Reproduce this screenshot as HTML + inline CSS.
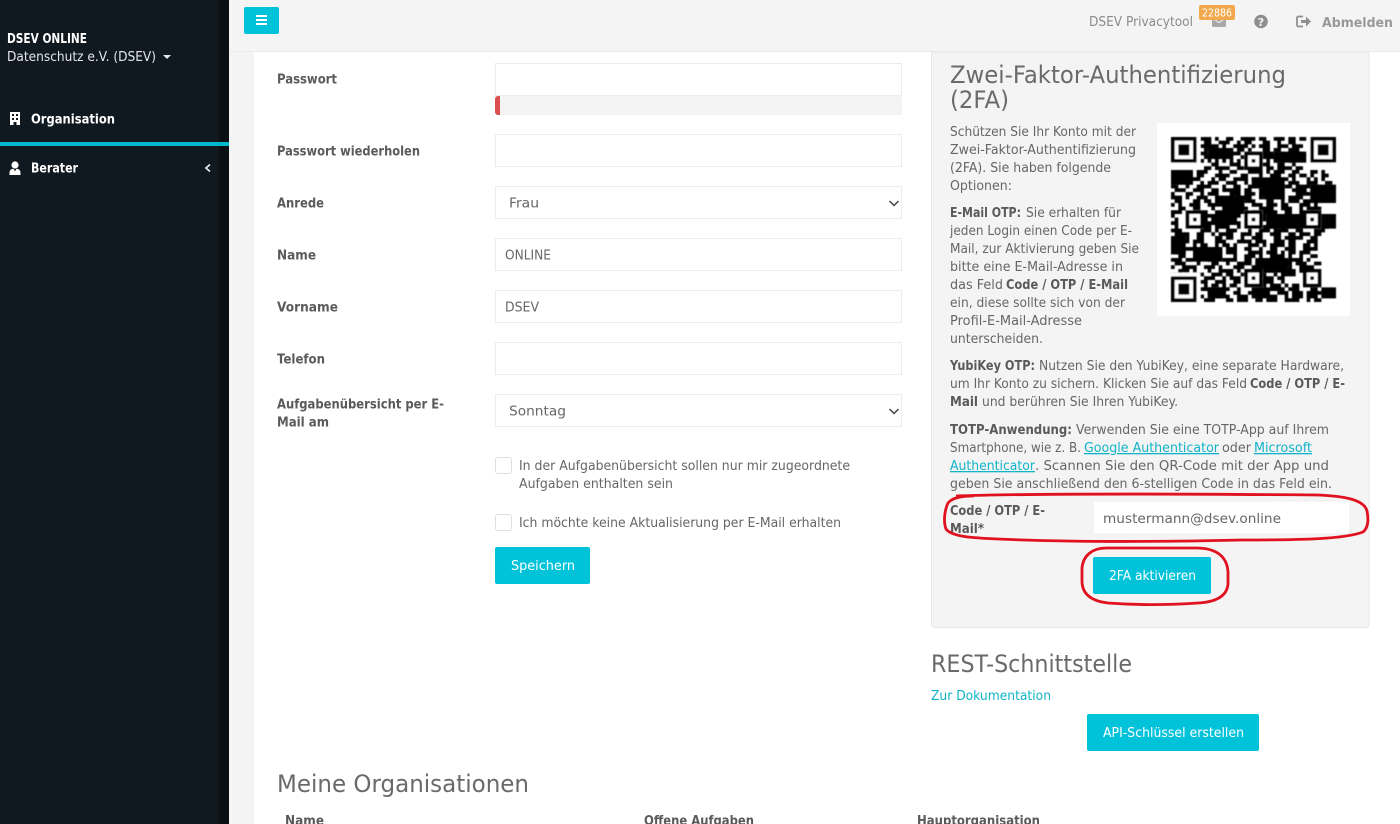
<!DOCTYPE html>
<html lang="de">
<head>
<meta charset="utf-8">
<title>DSEV Privacytool</title>
<style>
html,body{margin:0;padding:0;width:1400px;height:824px;overflow:hidden;background:#fff}
svg{display:block;position:absolute;left:0;top:0}
text{font-family:"DejaVu Sans","Liberation Sans",sans-serif;font-size:13px;fill:#666;white-space:pre}
.b{font-weight:700;fill:#5a5a5a}
.w{fill:#fff}
.h{font-size:24px;fill:#6a6a6a}
.l{fill:#11b3c9;text-decoration:underline}
.a{fill:#11b3c9}
.i{fill:none;stroke:#ececec;stroke-width:1}
</style>
</head>
<body>
<svg width="1400" height="824" viewBox="0 0 1400 824" xmlns="http://www.w3.org/2000/svg">
<defs><filter id="qb" x="-5%" y="-5%" width="110%" height="110%"><feGaussianBlur stdDeviation=".13"/></filter></defs>
<!-- backgrounds -->
<rect width="1400" height="824" fill="#fff"/>
<rect x="229" width="25" height="824" fill="#f4f4f4"/>
<rect x="229" width="1171" height="51" fill="#f4f4f4"/>
<rect x="229" y="51" width="1171" height="1" fill="#ececec"/>
<rect width="219" height="824" fill="#101820"/>
<rect x="219" width="10" height="824" fill="#0a0f14"/>
<rect y="142" width="229" height="4" fill="#00b8cc"/>

<!-- sidebar -->
<text x="7" y="43" class="b w" style="fill:#fff" textLength="80" lengthAdjust="spacingAndGlyphs">DSEV ONLINE</text>
<text x="7" y="61" style="fill:#e4e6e8" textLength="149" lengthAdjust="spacingAndGlyphs">Datenschutz e.V. (DSEV)</text>
<path d="M163 55h8l-4 4z" fill="#e4e6e8"/>
<path fill="#fff" fill-rule="evenodd" d="M10 112h10v13h-10zM12 114v2h2v-2zM16 114v2h2v-2zM12 118v2h2v-2zM16 118v2h2v-2zM13.500 122v3h3v-3z"/>
<text x="31" y="123.500" class="b" style="fill:#fff" textLength="84" lengthAdjust="spacingAndGlyphs">Organisation</text>
<circle cx="15" cy="165" r="3.600" fill="#fff"/>
<path fill="#fff" d="M9.500 175v-2.500c0-2.300 1.800-3.800 4-3.800l1.500 2.500 1.500-2.500c2.200 0 4 1.500 4 3.800v2.500z"/>
<text x="31" y="172.500" class="b" style="fill:#fff" textLength="47" lengthAdjust="spacingAndGlyphs">Berater</text>
<path d="M210 164.500l-4 3.500 4 3.500" fill="none" stroke="#e4e6e8" stroke-width="1.800"/>

<!-- topbar -->
<rect x="244" y="7" width="35" height="27" rx="2" fill="#00c3da"/>
<path d="M256 16h11M256 20h11M256 24h11" stroke="#fff" stroke-width="2"/>
<text x="1089" y="26" style="fill:#8b8b8b" textLength="104" lengthAdjust="spacingAndGlyphs">DSEV Privacytool</text>
<rect x="1212" y="16" width="14" height="11" rx="1.500" fill="#a8a8a8"/>
<path d="M1212 18l7 4.500 7-4.500" fill="none" stroke="#f4f4f4" stroke-width="1"/>
<rect x="1199" y="5" width="36" height="15" rx="2" fill="#f2a94e"/>
<text x="1202" y="16.500" style="fill:#fff;font-size:11px" textLength="30" lengthAdjust="spacingAndGlyphs">22886</text>
<circle cx="1261" cy="21.500" r="6.800" fill="#8f8f8f"/>
<text x="1257.700" y="26" style="fill:#f4f4f4;font-size:11px;font-weight:700" textLength="6.600" lengthAdjust="spacingAndGlyphs">?</text>
<path d="M1303 16.500h-4.500a1.500 1.500 0 0 0-1.500 1.500v7a1.500 1.500 0 0 0 1.500 1.500h4.500" fill="none" stroke="#8f8f8f" stroke-width="1.800"/>
<path d="M1301 20h5v-3.500l5 5-5 5v-3.500h-5z" fill="#8f8f8f"/>
<text x="1322" y="27" class="b" style="fill:#999" textLength="71" lengthAdjust="spacingAndGlyphs">Abmelden</text>

<!-- labels -->
<g transform="translate(0 .6)">
<text x="277" y="83" class="b" textLength="60" lengthAdjust="spacingAndGlyphs">Passwort</text>
<text x="277" y="155" class="b" textLength="143" lengthAdjust="spacingAndGlyphs">Passwort wiederholen</text>
<text x="277" y="207" class="b" textLength="47" lengthAdjust="spacingAndGlyphs">Anrede</text>
<text x="277" y="259" class="b" textLength="39" lengthAdjust="spacingAndGlyphs">Name</text>
<text x="277" y="311" class="b" textLength="61" lengthAdjust="spacingAndGlyphs">Vorname</text>
<text x="277" y="363" class="b" textLength="48" lengthAdjust="spacingAndGlyphs">Telefon</text>
<text x="277" y="408" class="b" textLength="167" lengthAdjust="spacingAndGlyphs">Aufgabenübersicht per E-</text>
<text x="277" y="426" class="b" textLength="52" lengthAdjust="spacingAndGlyphs">Mail am</text>
</g>

<!-- inputs -->
<rect x="495.500" y="63.500" width="406" height="32" class="i"/>
<path d="M498 96h402a2 2 0 0 1 2 2v15a2 2 0 0 1-2 2h-402z" fill="#f3f3f3"/>
<path d="M500 96h-2a3 3 0 0 0-3 3v13a3 3 0 0 0 3 3h2z" fill="#dc4f4f"/>
<rect x="495.500" y="134.500" width="406" height="32" class="i"/>
<rect x="495.500" y="186.500" width="406" height="32" class="i"/>
<rect x="495.500" y="238.500" width="406" height="32" class="i"/>
<rect x="495.500" y="290.500" width="406" height="32" class="i"/>
<rect x="495.500" y="342.500" width="406" height="32" class="i"/>
<rect x="495.500" y="394.500" width="406" height="32" class="i"/>
<text x="509" y="207.500" textLength="30" lengthAdjust="spacingAndGlyphs">Frau</text>
<text x="505" y="259.500" textLength="46" lengthAdjust="spacingAndGlyphs">ONLINE</text>
<text x="505" y="311.500" textLength="34" lengthAdjust="spacingAndGlyphs">DSEV</text>
<text x="509" y="415.500" textLength="57" lengthAdjust="spacingAndGlyphs">Sonntag</text>
<path d="M889.500 201l4.500 4.500 4.500-4.500M889.500 409l4.500 4.500 4.500-4.500" fill="none" stroke="#444" stroke-width="1.500"/>

<!-- checkboxes -->
<rect x="495.500" y="457.500" width="16" height="16" rx="2.500" fill="#fff" stroke="#dedede"/>
<rect x="495.500" y="514.500" width="16" height="16" rx="2.500" fill="#fff" stroke="#dedede"/>
<text x="519" y="470" textLength="331" lengthAdjust="spacingAndGlyphs">In der Aufgabenübersicht sollen nur mir zugeordnete</text>
<text x="519" y="488" textLength="154" lengthAdjust="spacingAndGlyphs">Aufgaben enthalten sein</text>
<text x="519" y="527" textLength="322" lengthAdjust="spacingAndGlyphs">Ich möchte keine Aktualisierung per E-Mail erhalten</text>
<rect x="495" y="547" width="95" height="37" rx="2" fill="#00c3da"/>
<text x="511" y="570" class="w" style="fill:#fff" textLength="64" lengthAdjust="spacingAndGlyphs">Speichern</text>

<!-- 2FA panel -->
<path d="M931.500 52v572a3.500 3.500 0 0 0 3.500 3.500h431a3 3 0 0 0 3-3v-572.500z" fill="#f4f4f4" stroke="#e6e6e6"/>
<text x="950" y="83" class="h" textLength="336" lengthAdjust="spacingAndGlyphs">Zwei-Faktor-Authentifizierung</text>
<text x="950" y="108" class="h" textLength="59" lengthAdjust="spacingAndGlyphs">(2FA)</text>

<text x="950" y="136" textLength="186" lengthAdjust="spacingAndGlyphs">Schützen Sie Ihr Konto mit der</text>
<text x="950" y="154" textLength="186" lengthAdjust="spacingAndGlyphs">Zwei-Faktor-Authentifizierung</text>
<text x="950" y="172" textLength="161" lengthAdjust="spacingAndGlyphs">(2FA). Sie haben folgende</text>
<text x="950" y="190" textLength="62" lengthAdjust="spacingAndGlyphs">Optionen:</text>

<text x="950" y="217" class="b" textLength="71" lengthAdjust="spacingAndGlyphs">E-Mail OTP:</text>
<text x="1026" y="217" textLength="95" lengthAdjust="spacingAndGlyphs">Sie erhalten für</text>
<text x="950" y="235" textLength="182" lengthAdjust="spacingAndGlyphs">jeden Login einen Code per E-</text>
<text x="950" y="253" textLength="189" lengthAdjust="spacingAndGlyphs">Mail, zur Aktivierung geben Sie</text>
<text x="950" y="271" textLength="173" lengthAdjust="spacingAndGlyphs">bitte eine E-Mail-Adresse in</text>
<text x="950" y="289" textLength="53" lengthAdjust="spacingAndGlyphs">das Feld</text>
<text x="1006" y="289" class="b" textLength="122" lengthAdjust="spacingAndGlyphs">Code / OTP / E-Mail</text>
<text x="950" y="307" textLength="175" lengthAdjust="spacingAndGlyphs">ein, diese sollte sich von der</text>
<text x="950" y="325" textLength="132" lengthAdjust="spacingAndGlyphs">Profil-E-Mail-Adresse</text>
<text x="950" y="343" textLength="93" lengthAdjust="spacingAndGlyphs">unterscheiden.</text>

<text x="950" y="370" class="b" textLength="85" lengthAdjust="spacingAndGlyphs">YubiKey OTP:</text>
<text x="1039" y="370" textLength="305" lengthAdjust="spacingAndGlyphs">Nutzen Sie den YubiKey, eine separate Hardware,</text>
<text x="950" y="388" textLength="297" lengthAdjust="spacingAndGlyphs">um Ihr Konto zu sichern. Klicken Sie auf das Feld</text>
<text x="1250" y="388" class="b" textLength="95" lengthAdjust="spacingAndGlyphs">Code / OTP / E-</text>
<text x="950" y="406" class="b" textLength="28" lengthAdjust="spacingAndGlyphs">Mail</text>
<text x="982" y="406" textLength="196" lengthAdjust="spacingAndGlyphs">und berühren Sie Ihren YubiKey.</text>

<text x="950" y="434" class="b" textLength="122" lengthAdjust="spacingAndGlyphs">TOTP-Anwendung:</text>
<text x="1076" y="434" textLength="253" lengthAdjust="spacingAndGlyphs">Verwenden Sie eine TOTP-App auf Ihrem</text>
<text x="950" y="452" textLength="131" lengthAdjust="spacingAndGlyphs">Smartphone, wie z. B.</text>
<text x="1084" y="452" class="l" textLength="135" lengthAdjust="spacingAndGlyphs">Google Authenticator</text>
<text x="1222" y="452" textLength="29" lengthAdjust="spacingAndGlyphs">oder</text>
<text x="1254" y="452" class="l" textLength="58" lengthAdjust="spacingAndGlyphs">Microsoft</text>
<text x="950" y="470" class="l" textLength="85" lengthAdjust="spacingAndGlyphs">Authenticator</text>
<text x="1035" y="470" textLength="294" lengthAdjust="spacingAndGlyphs">. Scannen Sie den QR-Code mit der App und</text>
<text x="950" y="488" textLength="382" lengthAdjust="spacingAndGlyphs">geben Sie anschließend den 6-stelligen Code in das Feld ein.</text>

<text x="950" y="515" class="b" textLength="95" lengthAdjust="spacingAndGlyphs">Code / OTP / E-</text>
<text x="950" y="533" class="b" textLength="34" lengthAdjust="spacingAndGlyphs">Mail*</text>
<rect x="1093" y="501" width="257" height="33" fill="#fff" stroke="#efefef"/>
<text x="1103" y="523" textLength="178" lengthAdjust="spacingAndGlyphs">mustermann@dsev.online</text>
<rect x="1093" y="557" width="118" height="37" rx="2" fill="#00c3da"/>
<text x="1109" y="580" style="fill:#fff" textLength="87" lengthAdjust="spacingAndGlyphs">2FA aktivieren</text>

<!-- red hand-drawn outlines -->
<path d="M956 496C1040 493 1200 494 1318 495c24 1 46 4 49 16 2 10 1 17-4 21-18 7-60 8-120 8-90 2-180 2-245-1-24-1-46-2-52-10-3-8-1-20 2-26 4-5 12-7 26-7z" fill="none" stroke="#e0121f" stroke-width="2.800"/>
<path d="M1106 548h90c20 0 31 8 32 24v12c-1 12-12 18-30 19-30 2-64 2-90 0-17-2-26-9-26-22v-13c1-12 10-20 24-20z" fill="none" stroke="#e0121f" stroke-width="2.800"/>

<!-- QR -->
<rect x="1157" y="123" width="193" height="193" fill="#fff"/>
<g transform="translate(1171 137) scale(3.667)">
<g filter="url(#qb)">
<path fill="none" stroke="#000" stroke-width="1.020" d="
M8 .5h3m1 0h1m2 0h2m2 0h4m1 0h2m2 0h3m1 0h2m1 0h2
M9 1.500h2m2 0h3m2 0h1m1 0h2m3 0h2m2 0h1m2 0h2
M8 2.500h5m1 0h1m2 0h4m1 0h1m1 0h3m2 0h3m1 0h3
M9 3.500h1m2 0h3m3 0h2m1 0h1m3 0h2m1 0h2m2 0h3
M8 4.500h2m3 0h1m1 0h4m4 0h1m1 0h3m2 0h1m1 0h4
M9 5.500h3m2 0h2m3 0h1m5 0h4m1 0h1m2 0h2
M8 6.500h1m1 0h1m1 0h1m1 0h1m1 0h1m1 0h1m5 0h1m1 0h1m1 0h1m1 0h1m1 0h1
M11 7.500h2m3 0h3m6 0h2m2 0h2m2 0h1
M9 8.500h2m1 0h4m2 0h2m1 0h3m2 0h2m1 0h4m1 0h2
M0 9.500h5m2 0h3m3 0h1m2 0h2m3 0h4m1 0h1m1 0h3m2 0h2m3 0h2m1 0h1
M1 10.500h2m1 0h1m2 0h2m3 0h4m3 0h2m3 0h1m2 0h3m2 0h2m1 0h2m1 0h1m2 0h2
M0 11.500h3m2 0h3m3 0h1m1 0h2m2 0h4m1 0h2m3 0h5m1 0h1m3 0h1m1 0h1m1 0h1
M2 12.500h4m2 0h1m1 0h3m2 0h3m2 0h1m2 0h3m1 0h2m3 0h3m2 0h3m2 0h2
M0 13.500h2m2 0h1m2 0h4m3 0h1m2 0h2m2 0h3m3 0h3m1 0h2m1 0h4m2 0h1
M1 14.500h3m2 0h3m2 0h2m1 0h5m1 0h2m2 0h4m1 0h2m2 0h4m1 0h3
M0 15.500h1m3 0h2m2 0h1m1 0h3m3 0h3m1 0h3m1 0h3m2 0h2m3 0h4m1 0h2
M0 16.500h3m1 0h1m2 0h3m2 0h1m3 0h1m1 0h4m2 0h1m1 0h5m1 0h4m2 0h3
M1 17.500h2m3 0h2m1 0h2m1 0h3m2 0h2m1 0h3m3 0h2m2 0h1m1 0h3m1 0h4
M0 18.500h1m1 0h1m2 0h3m2 0h2m2 0h4m1 0h1m2 0h3m1 0h3m1 0h2m3 0h3m1 0h1
M2 19.500h2m2 0h2m3 0h1m2 0h2m1 0h4m3 0h4m2 0h3m2 0h1m1 0h4
M0 20.500h3m5 0h2m2 0h3m1 0h1m1 0h2m2 0h2m1 0h4m2 0h2m2 0h2m1 0h2
M0 21.500h1m8 0h4m1 0h5m4 0h3m1 0h2m1 0h3m5 0h2
M1 22.500h1m7 0h1m1 0h3m1 0h3m5 0h3m2 0h3m1 0h2m6 0h2
M0 23.500h2m7 0h3m2 0h2m1 0h2m5 0h1m1 0h2m3 0h5m5 0h1
M1 24.500h1m7 0h2m1 0h4m2 0h1m6 0h4m1 0h1m1 0h3m6 0h2
M0 25.500h3m5 0h3m1 0h1m2 0h3m3 0h1m2 0h3m1 0h4m2 0h2m3 0h3
M1 26.500h4m2 0h2m2 0h1m1 0h4m2 0h3m1 0h2m2 0h3m2 0h2m1 0h3m1 0h2
M0 27.500h2m2 0h1m2 0h2m3 0h2m1 0h2m2 0h1m2 0h3m3 0h2m1 0h5m2 0h2
M2 28.500h3m1 0h3m3 0h3m3 0h4m1 0h3m2 0h3m1 0h2m3 0h3
M0 29.500h3m3 0h1m1 0h2m2 0h1m1 0h2m1 0h1m3 0h3m1 0h1m1 0h4m1 0h2m2 0h2m1 0h1
M1 30.500h1m1 0h3m2 0h4m3 0h3m2 0h2m2 0h1m2 0h2m2 0h3m2 0h4
M0 31.500h4m2 0h1m2 0h1m1 0h3m1 0h3m3 0h4m1 0h3m1 0h1m1 0h2m1 0h3
M2 32.500h2m3 0h3m2 0h2m3 0h1m2 0h3m1 0h1m2 0h4m1 0h1m2 0h1m2 0h2
M0 33.500h3m1 0h2m1 0h1m2 0h3m1 0h4m2 0h2m2 0h3m1 0h2m2 0h4m1 0h1
M1 34.500h3m3 0h1m3 0h2m2 0h1m2 0h4m1 0h2m3 0h1m1 0h3m1 0h3m2 0h2
M0 35.500h1m2 0h4m2 0h3m1 0h1m3 0h3m2 0h2m1 0h4m3 0h1m2 0h4
M2 36.500h3m1 0h1m3 0h1m2 0h4m1 0h1m3 0h2m2 0h2m2 0h4m1 0h2m1 0h2
M0 37.500h3m3 0h3m2 0h3m1 0h2m2 0h3m1 0h3m2 0h1m1 0h4m2 0h1m1 0h2
M9 38.500h3m2 0h1m1 0h3m3 0h1m2 0h3m1 0h2m6 0h2
M8 39.500h2m2 0h3m2 0h2m5 0h4m2 0h1m7 0h2
M9 40.500h1m1 0h2m1 0h1m1 0h2m6 0h2m1 0h3m1 0h1m6 0h3
M8 41.500h3m2 0h3m2 0h1m5 0h1m2 0h4m1 0h1m5 0h2
M10 42.500h2m2 0h1m2 0h2m2 0h3m1 0h2m2 0h3m1 0h3m1 0h4
M8 43.500h1m2 0h3m1 0h1m2 0h3m3 0h1m2 0h2m2 0h1m1 0h3m1 0h3
M9 44.500h3m3 0h2m1 0h3m2 0h2m1 0h3m2 0h4m2 0h1m1 0h2"/>
<path fill="#000" d="M10 3h7v3h-7zM28 4h9v3h-9zM0 9h6v4h-6zM22 11h9v3h-9zM25 14h6v3h-6zM12 16h8v3h-8zM14 19h6v2h-6zM38 13h7v5h-7zM11 21h7v3h-7zM26 21h10v4h-10zM40 21h5v4h-5zM0 27h4v5h-4zM6 30h8v4h-8zM23 33h9v4h-9zM10 41h5v3h-5zM22 41h5v3h-5zM33 40h2v4h-2zM41 41h4v3h-4z"/>
<path fill="#fff" d="M0 0h8v8h-8zM37 0h8v8h-8zM0 37h8v8h-8zM20 4h5v5h-5zM4 20h5v5h-5zM20 20h5v5h-5zM36 20h5v5h-5zM20 36h5v5h-5zM36 36h5v5h-5z"/>
<path fill="#000" fill-rule="evenodd" d="M0 0h7v7h-7zM1 1v5h5v-5zM2 2h3v3h-3zM38 0h7v7h-7zM39 1v5h5v-5zM40 2h3v3h-3zM0 38h7v7h-7zM1 39v5h5v-5zM2 40h3v3h-3zM20 4h5v5h-5zM21 5v3h3v-3zM22 6h1v1h-1zM4 20h5v5h-5zM5 21v3h3v-3zM6 22h1v1h-1zM20 20h5v5h-5zM21 21v3h3v-3zM22 22h1v1h-1zM36 20h5v5h-5zM37 21v3h3v-3zM38 22h1v1h-1zM20 36h5v5h-5zM21 37v3h3v-3zM22 38h1v1h-1zM36 36h5v5h-5zM37 37v3h3v-3zM38 38h1v1h-1z"/>
</g>
</g>

<!-- REST -->
<text x="931" y="672" class="h" textLength="201" lengthAdjust="spacingAndGlyphs">REST-Schnittstelle</text>
<text x="931" y="700" class="a" textLength="120" lengthAdjust="spacingAndGlyphs">Zur Dokumentation</text>
<rect x="1087" y="714" width="172" height="37" rx="2" fill="#00c3da"/>
<text x="1103" y="737" style="fill:#fff" textLength="141" lengthAdjust="spacingAndGlyphs">API-Schlüssel erstellen</text>

<!-- Organisations -->
<text x="277" y="792" class="h" textLength="252" lengthAdjust="spacingAndGlyphs">Meine Organisationen</text>
<text x="285" y="825" class="b" textLength="39" lengthAdjust="spacingAndGlyphs">Name</text>
<text x="644" y="825" class="b" textLength="110" lengthAdjust="spacingAndGlyphs">Offene Aufgaben</text>
<text x="917" y="825" class="b" textLength="123" lengthAdjust="spacingAndGlyphs">Hauptorganisation</text>
</svg>
</body>
</html>
